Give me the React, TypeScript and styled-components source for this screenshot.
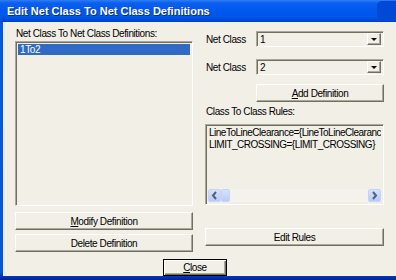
import React from "react";
import styled, { createGlobalStyle } from "styled-components";

const face = "#F1EFE6";
const shadow = "#ACA899";
const darkShadow = "#716F64";

const GlobalStyle = createGlobalStyle`
  html, body {
    margin: 0;
    padding: 0;
    background: #ffffff;
  }
  body {
    font-family: "Liberation Sans", Arial, sans-serif;
    font-size: 10px;
    letter-spacing: -0.4px;
    color: #000;
  }
`;

const Window = styled.div`
  width: 396px;
  height: 280px;
  overflow: hidden;
  display: flex;
  flex-direction: column;
`;

const TitleBar = styled.div`
  position: relative;
  flex: none;
  height: 22px;
  display: flex;
  align-items: center;
  padding-left: 7px;
  background: linear-gradient(
    to bottom,
    #2f7ef4 0px,
    #0a5fef 3px,
    #0058ee 11px,
    #0055e8 17px,
    #0047d2 21px,
    #003fc4 22px
  );
  color: #fff;
  font: bold 11px "Liberation Sans", Arial, sans-serif;
  letter-spacing: 0;
  text-shadow: 1px 1px 0 #0a2c9c;
  white-space: nowrap;
`;

const TitleButton = styled.div`
  position: absolute;
  top: 1px;
  left: 377px;
  width: 30px;
  height: 19px;
  border-radius: 5px 0 0 5px;
  background: #0048d6;
`;

const Frame = styled.div`
  flex: 1;
  display: flex;
  padding: 0 0 4px 3px;
  background: linear-gradient(to bottom, #0058ee 0%, #0055e5 97%, #001e96 100%);
`;

const Body = styled.div`
  flex: 1;
  display: flex;
  flex-direction: column;
  background: ${face};
  padding-left: 12px;
`;

const Columns = styled.div`
  display: flex;
  gap: 12px;
`;

const LeftColumn = styled.div`
  width: 178px;
  display: flex;
  flex-direction: column;
  padding-top: 5px;
`;

const RightColumn = styled.div`
  width: 179px;
  display: flex;
  flex-direction: column;
  padding-top: 9px;
`;

const Label = styled.div<{ $top?: number; $gap?: number }>`
  height: 13px;
  line-height: 13px;
  margin-top: ${(p) => p.$top ?? 0}px;
  margin-bottom: ${(p) => p.$gap ?? 0}px;
  padding-left: 1px;
  white-space: nowrap;
`;

const Sunken = styled.div`
  border-style: solid;
  border-width: 1px;
  border-color: ${shadow} #ffffff #ffffff ${shadow};
  box-shadow: inset 1px 1px 0 ${darkShadow}, inset -1px -1px 0 ${face};
  background: ${face};
  overflow: hidden;
`;

const ListBox = styled(Sunken)`
  height: 159px;
  padding: 2px;
`;

const ListItem = styled.div<{ $selected?: boolean }>`
  height: 11px;
  line-height: 11px;
  padding-left: 2px;
  background: ${(p) => (p.$selected ? "#316ac5" : "transparent")};
  color: ${(p) => (p.$selected ? "#fff" : "#000")};
`;

const Button = styled.button<{ $top?: number }>`
  display: block;
  height: 18px;
  margin: ${(p) => p.$top ?? 0}px 0 0 0;
  padding: 0;
  font: inherit;
  letter-spacing: inherit;
  color: #000;
  background: ${face};
  border-style: solid;
  border-width: 1px;
  border-color: #ffffff ${darkShadow} ${darkShadow} #ffffff;
  box-shadow: inset -1px -1px 0 ${shadow};
  line-height: 15px;
  overflow: hidden;
  white-space: nowrap;
  text-align: center;
  cursor: default;

  u {
    text-decoration: underline;
    text-underline-offset: 1px;
  }
`;

const WideButton = styled(Button)<{ $w?: number }>`
  width: ${(p) => p.$w ?? 178}px;
`;

const CloseButton = styled(Button)`
  width: 64px;
  height: 17px;
  border: 1px solid #000;
  box-shadow: inset 1px 1px 0 #fff, inset -1px -1px 0 ${darkShadow},
    inset -2px -2px 0 ${shadow};
  line-height: 14px;
`;

const FieldRow = styled.div<{ $top?: number }>`
  display: flex;
  align-items: center;
  height: 16px;
  margin-top: ${(p) => p.$top ?? 0}px;
`;

const FieldLabel = styled.div`
  width: 51px;
  flex: none;
  padding-left: 1px;
  box-sizing: border-box;
  white-space: nowrap;
`;

const Combo = styled(Sunken)`
  flex: 1;
  height: 16px;
  display: flex;
  align-items: stretch;
  padding: 2px 2px 2px 3px;
  box-sizing: border-box;
`;

const ComboValue = styled.div`
  flex: 1;
  line-height: 11px;
`;

const ComboArrow = styled.div`
  width: 14px;
  margin: -1px 0;
  display: flex;
  align-items: center;
  justify-content: center;
  border-style: solid;
  border-width: 1px;
  border-color: #ffffff ${darkShadow} ${darkShadow} #ffffff;
  box-shadow: inset -1px -1px 0 ${shadow};
  box-sizing: border-box;

  &::after {
    content: "";
    display: block;
    width: 0;
    height: 0;
    border-left: 3px solid transparent;
    border-right: 3px solid transparent;
    border-top: 3px solid #000;
    margin-top: 1px;
  }
`;

const AddButton = styled(Button)`
  width: 128px;
  margin-left: 51px;
`;

const RulesBox = styled(Sunken)`
  height: 81px;
  box-sizing: border-box;
  display: flex;
  flex-direction: column;
  padding: 2px 2px 2px 3px;
`;

const RulesText = styled.div`
  flex: 1;
  font-size: 10px;
  letter-spacing: -0.5px;
  line-height: 12px;
  white-space: nowrap;
  overflow: hidden;
`;

const HScroll = styled.div`
  height: 13px;
  display: flex;
  align-items: stretch;
  margin-left: -1px;
`;

const ScrollPart = styled.div<{ $w: number }>`
  width: ${(p) => p.$w}px;
  flex: none;
  display: flex;
  align-items: center;
  justify-content: center;
  border: 1px solid #c4d3f8;
  border-radius: 2px;
  background: linear-gradient(to bottom, #d6e2fd, #b9cbf7);
  box-sizing: border-box;
`;

const ScrollTrack = styled.div`
  flex: 1;
  background: #f3f2ec;
`;

const Footer = styled.div`
  display: flex;
  justify-content: center;
  padding-right: 21px;
  margin-top: 7px;
`;

function Chevron({ dir }: { dir: "left" | "right" }) {
  const d = dir === "left" ? "M5 1 L2 4.5 L5 8" : "M2 1 L5 4.5 L2 8";
  return (
    <svg width="7" height="9" viewBox="0 0 7 9">
      <path d={d} fill="none" stroke="#4d6185" strokeWidth="2" />
    </svg>
  );
}

export default function App() {
  return (
    <>
      <GlobalStyle />
      <Window>
        <TitleBar>
          Edit Net Class To Net Class Definitions
          <TitleButton />
        </TitleBar>
        <Frame>
          <Body>
            <Columns>
              <LeftColumn>
                <Label $gap={1}>Net Class To Net Class Definitions:</Label>
                <ListBox>
                  <ListItem $selected>1To2</ListItem>
                </ListBox>
                <WideButton $top={6}>
                  <u>M</u>odify Definition
                </WideButton>
                <WideButton $top={4}>Delete Definition</WideButton>
              </LeftColumn>
              <RightColumn>
                <FieldRow>
                  <FieldLabel>Net Class</FieldLabel>
                  <Combo>
                    <ComboValue>1</ComboValue>
                    <ComboArrow />
                  </Combo>
                </FieldRow>
                <FieldRow $top={12}>
                  <FieldLabel>Net Class</FieldLabel>
                  <Combo>
                    <ComboValue>2</ComboValue>
                    <ComboArrow />
                  </Combo>
                </FieldRow>
                <AddButton $top={9}>
                  <u>A</u>dd Definition
                </AddButton>
                <Label $top={3} $gap={6}>
                  Class To Class Rules:
                </Label>
                <RulesBox>
                  <RulesText>
                    LineToLineClearance={"{"}LineToLineClearance{"}"}
                    <br />
                    LIMIT_CROSSING={"{"}LIMIT_CROSSING{"}"}
                  </RulesText>
                  <HScroll>
                    <ScrollPart $w={13}>
                      <Chevron dir="left" />
                    </ScrollPart>
                    <ScrollPart $w={9} />
                    <ScrollTrack />
                    <ScrollPart $w={13}>
                      <Chevron dir="right" />
                    </ScrollPart>
                  </HScroll>
                </RulesBox>
                <WideButton $top={23} $w={179}>
                  Edit Rules
                </WideButton>
              </RightColumn>
            </Columns>
            <Footer>
              <CloseButton>
                <u>C</u>lose
              </CloseButton>
            </Footer>
          </Body>
        </Frame>
      </Window>
    </>
  );
}
